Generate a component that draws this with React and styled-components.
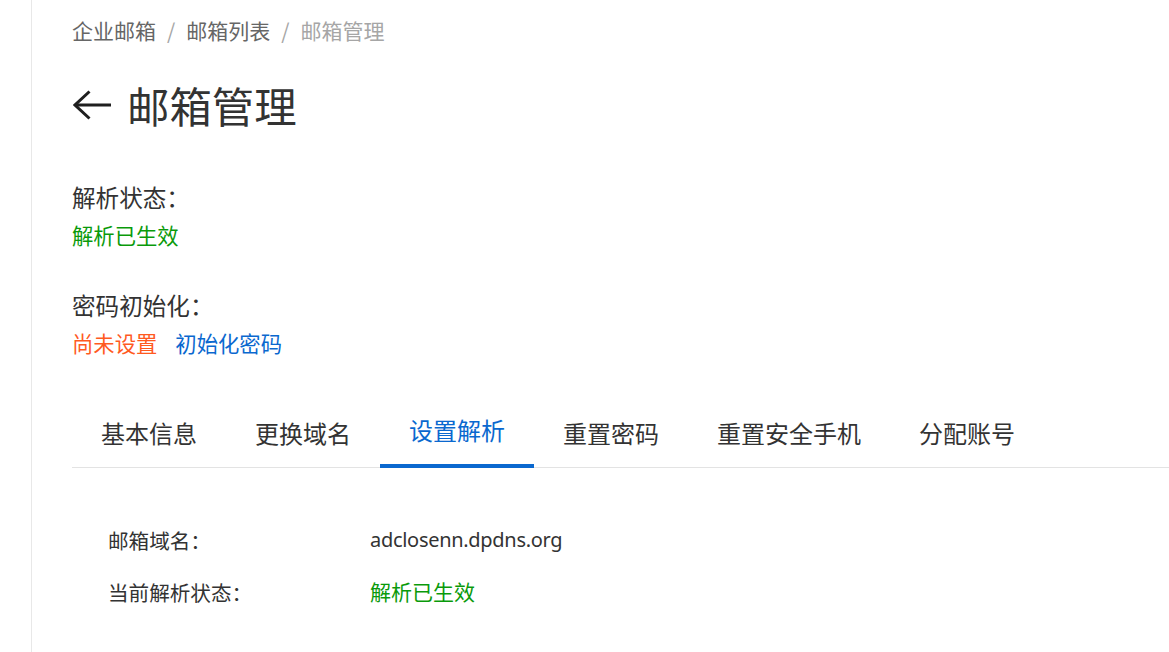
import React, { useState } from "react";
import styled, { createGlobalStyle } from "styled-components";

const GlobalStyle = createGlobalStyle`
  html, body {
    margin: 0;
    padding: 0;
    background: #ffffff;
  }
  body {
    font-family: "Noto Sans", "Noto Sans CJK SC", sans-serif;
    color: #333333;
  }
  * { box-sizing: border-box; }
`;

const Shell = styled.div`
  min-height: 100vh;
  padding-left: 31px;
  display: flex;
`;

const Main = styled.main`
  flex: 1;
  border-left: 1px solid #e8e8e8;
  padding: 14px 0 40px 40px;
  display: flex;
  flex-direction: column;
`;

const Breadcrumb = styled.nav`
  display: flex;
  align-items: center;
  font-size: 21px;
  line-height: 32px;
  font-family: "Noto Sans CJK SC", sans-serif;
`;

const Crumb = styled.span`
  color: ${(p) => (p.$current ? "#a6a6a6" : "#666666")};
`;

const Sep = styled.span`
  color: #a6a6a6;
  margin: 0 11px;
`;

const TitleRow = styled.div`
  display: flex;
  align-items: center;
  gap: 16px;
  margin-top: 29px;
  height: 60px;
`;

const BackButton = styled.button`
  border: 0;
  background: none;
  padding: 0;
  margin-left: 1px;
  display: flex;
  cursor: pointer;
`;

const Title = styled.h1`
  margin: 0;
  font-size: 42.4px;
  line-height: 60px;
  font-weight: 400;
  color: #333333;
  font-family: "Noto Sans CJK SC", sans-serif;
`;

const InfoBlock = styled.section`
  display: flex;
  flex-direction: column;
  gap: 6px;
  margin-top: ${(p) => p.$top}px;
`;

const InfoLabel = styled.div`
  font-size: 23.6px;
  line-height: 32px;
  color: #333333;
  font-family: "Noto Sans CJK SC", sans-serif;
`;

const InfoValue = styled.div`
  display: flex;
  gap: 18px;
  font-size: 21.33px;
  line-height: 32px;
  font-family: "Noto Sans CJK SC", sans-serif;
`;

const Status = styled.span`
  color: ${(p) => p.$color};
`;

const LinkButton = styled.a`
  color: #0a68cf;
  text-decoration: none;
  cursor: pointer;
`;

const TabBar = styled.div`
  display: flex;
  margin-top: 55px;
  border-bottom: 1px solid #e3e3e3;
`;

const Tab = styled.button`
  border: 0;
  background: none;
  margin: 0 0 -1px 0;
  padding: ${(p) => (p.$active ? "0 29px 18px" : "3px 29px 15px")};
  font-size: 24px;
  line-height: 32px;
  font-family: "Noto Sans CJK SC", sans-serif;
  color: ${(p) => (p.$active ? "#0a68cf" : "#333333")};
  border-bottom: 4px solid ${(p) => (p.$active ? "#0a68cf" : "transparent")};
  cursor: pointer;
`;

const DataList = styled.dl`
  margin: 57px 0 0 0;
  padding-left: 36px;
  display: flex;
  flex-direction: column;
  gap: 22px;
`;

const DataRow = styled.div`
  display: grid;
  grid-template-columns: 262px 1fr;
  font-size: 20px;
  line-height: 30px;
  font-family: "Noto Sans", "Noto Sans CJK SC", sans-serif;
`;

const DataLabel = styled.dt`
  margin: 0;
  color: #333333;
  font-family: "Noto Sans CJK SC", sans-serif;
  font-size: 20.6px;
`;

const DataValue = styled.dd`
  margin: 0;
  color: ${(p) => p.$color || "#333333"};
  font-size: ${(p) => (p.$latin ? "20px" : "21px")};
  letter-spacing: ${(p) => (p.$latin ? "-0.3px" : "0")};
`;

const ArrowLeft = () => (
  <svg width="38" height="30" viewBox="0 0 38 30" fill="none">
    <polyline
      points="16.5,1.5 2,15 16.5,28.5"
      stroke="#1f1f1f"
      strokeWidth="3"
      strokeLinecap="butt"
      strokeLinejoin="miter"
    />
    <line x1="2" y1="15" x2="38" y2="15" stroke="#1f1f1f" strokeWidth="3" />
  </svg>
);

const tabs = ["基本信息", "更换域名", "设置解析", "重置密码", "重置安全手机", "分配账号"];

export default function App() {
  const [active, setActive] = useState(2);
  return (
    <>
      <GlobalStyle />
      <Shell>
        <Main>
          <Breadcrumb>
            <Crumb>企业邮箱</Crumb>
            <Sep>/</Sep>
            <Crumb>邮箱列表</Crumb>
            <Sep>/</Sep>
            <Crumb $current>邮箱管理</Crumb>
          </Breadcrumb>

          <TitleRow>
            <BackButton aria-label="返回">
              <ArrowLeft />
            </BackButton>
            <Title>邮箱管理</Title>
          </TitleRow>

          <InfoBlock $top={46}>
            <InfoLabel>解析状态：</InfoLabel>
            <InfoValue>
              <Status $color="#0a9a0a">解析已生效</Status>
            </InfoValue>
          </InfoBlock>

          <InfoBlock $top={38}>
            <InfoLabel>密码初始化：</InfoLabel>
            <InfoValue>
              <Status $color="#ff5a1f">尚未设置</Status>
              <LinkButton>初始化密码</LinkButton>
            </InfoValue>
          </InfoBlock>

          <TabBar>
            {tabs.map((t, i) => (
              <Tab key={t} $active={i === active} onClick={() => setActive(i)}>
                {t}
              </Tab>
            ))}
          </TabBar>

          <DataList>
            <DataRow>
              <DataLabel>邮箱域名：</DataLabel>
              <DataValue $latin>adclosenn.dpdns.org</DataValue>
            </DataRow>
            <DataRow>
              <DataLabel>当前解析状态：</DataLabel>
              <DataValue $color="#0a9a0a">解析已生效</DataValue>
            </DataRow>
          </DataList>
        </Main>
      </Shell>
    </>
  );
}
